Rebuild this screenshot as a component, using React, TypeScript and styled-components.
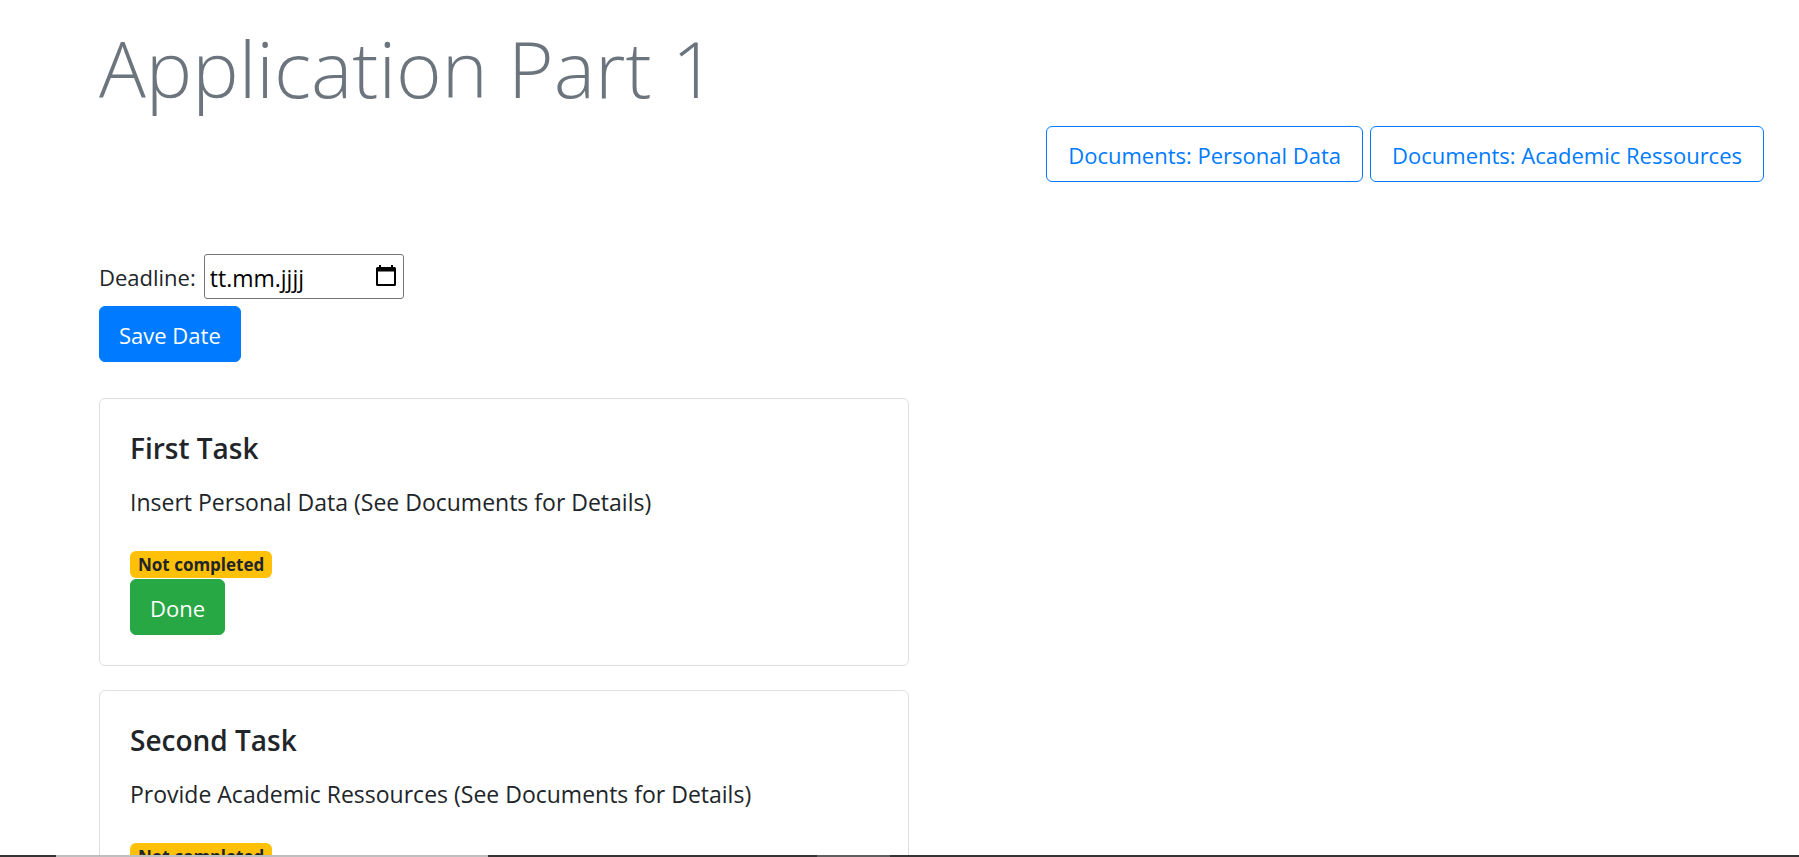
import React from 'react';
import styled, { createGlobalStyle } from 'styled-components';

const GlobalStyle = createGlobalStyle`
  *, *::before, *::after { box-sizing: border-box; }
  body {
    margin: 0;
    background: #fff;
    color: #212529;
    font-family: "Open Sans", "Noto Sans", sans-serif;
    font-size: 22px;
    line-height: 36px;
  }
`;

const Page = styled.main`
  display: flex;
  flex-direction: column;
  padding: 18px 35px 36px 99px;
`;

const Title = styled.h1`
  margin: 0;
  color: #6c757d;
  font-size: 78px;
  font-weight: 300;
  line-height: 101px;
`;

const DocumentLinks = styled.nav`
  display: flex;
  justify-content: flex-end;
  gap: 7px;
  margin-top: 7px;
`;

const variants = {
  primary: { background: '#007bff', border: '#007bff', text: '#fff', inset: 19 },
  success: { background: '#28a745', border: '#28a745', text: '#fff', inset: 19 },
  outline: { background: 'transparent', border: '#007bff', text: '#007bff', inset: 21 },
};

const Button = styled.button<{ $variant: keyof typeof variants }>`
  padding: 10px ${(p) => variants[p.$variant].inset}px 8px;
  border: 1px solid ${(p) => variants[p.$variant].border};
  border-radius: 6px;
  background: ${(p) => variants[p.$variant].background};
  color: ${(p) => variants[p.$variant].text};
  font: inherit;
  text-align: center;
  text-decoration: none;
  cursor: pointer;
`;

const DeadlineForm = styled.form`
  display: flex;
  flex-direction: column;
  align-items: flex-start;
  gap: 7px;
  margin: 72px 0 36px;
`;

const Field = styled.div`
  display: flex;
  align-items: center;
  gap: 8px;
`;

const DateBox = styled.div`
  display: flex;
  align-items: center;
  width: 200px;
  height: 45px;
  padding: 0 7px 0 5px;
  border: 1px solid #767676;
  border-radius: 3px;
`;

const DateInput = styled.input`
  flex: 1;
  min-width: 0;
  padding: 2px 0 0;
  border: 0;
  outline: 0;
  background: none;
  color: #000;
  font: inherit;
  font-size: 23px;

  &::placeholder { color: #000; opacity: 1; }
`;

const PickerButton = styled.button`
  display: flex;
  padding: 0 0 2px;
  border: 0;
  background: none;
  color: #000;
  cursor: pointer;
`;

const TaskList = styled.div`
  display: flex;
  flex-direction: column;
  gap: 24px;
  width: 45vw;
`;

const Card = styled.section`
  display: flex;
  flex-direction: column;
  align-items: flex-start;
  padding: 31px 30px 30px;
  border: 1px solid #dfdfdf;
  border-radius: 6px;
`;

const CardTitle = styled.h2`
  margin: 0 0 18px;
  font-size: 28px;
  font-weight: 600;
  line-height: 36px;
`;

const CardText = styled.p`
  margin: 0 0 31px;
  font-size: 23px;
`;

const Badge = styled.span`
  margin-bottom: 1px;
  padding: 0 8px;
  border-radius: 6px;
  background: #ffc107;
  font-size: 17px;
  font-weight: 700;
  line-height: 27px;
`;

const BottomStrip = styled.div`
  position: fixed;
  inset: auto 0 0;
  display: flex;
  height: 2px;
  background: #353334;
`;

const StripPart = styled.span<{ $share: number; $color?: string }>`
  width: ${(p) => p.$share}%;
  background: ${(p) => p.$color ?? 'transparent'};
`;

const CalendarIcon = () => (
  <svg width="20" height="21" viewBox="0 0 20 21" aria-hidden="true">
    <path
      fill="currentColor"
      fillRule="evenodd"
      d="M3 0h2v2h10V0h2v2h1.500a1.500 1.500 0 0 1 1.500 1.500v16a1.500 1.500 0 0 1-1.500 1.500h-17A1.500 1.500 0 0 1 0 19.500v-16A1.500 1.500 0 0 1 1.500 2H3zM2 6.500V19h16V6.500z"
    />
  </svg>
);

const tasks = [
  { title: 'First Task', text: 'Insert Personal Data (See Documents for Details)' },
  { title: 'Second Task', text: 'Provide Academic Ressources (See Documents for Details)' },
];

export default function App() {
  return (
    <>
      <GlobalStyle />
      <Page>
        <Title>Application Part 1</Title>
        <DocumentLinks>
          <Button as="a" href="#personal" $variant="outline">Documents: Personal Data</Button>
          <Button as="a" href="#academic" $variant="outline">Documents: Academic Ressources</Button>
        </DocumentLinks>
        <DeadlineForm onSubmit={(e) => e.preventDefault()}>
          <Field>
            <label htmlFor="deadline">Deadline:</label>
            <DateBox>
              <DateInput id="deadline" type="text" placeholder="tt.mm.jjjj" />
              <PickerButton type="button" aria-label="Kalender">
                <CalendarIcon />
              </PickerButton>
            </DateBox>
          </Field>
          <Button type="submit" $variant="primary">Save Date</Button>
        </DeadlineForm>
        <TaskList>
          {tasks.map((task) => (
            <Card key={task.title}>
              <CardTitle>{task.title}</CardTitle>
              <CardText>{task.text}</CardText>
              <Badge>Not completed</Badge>
              <Button type="button" $variant="success">Done</Button>
            </Card>
          ))}
        </TaskList>
      </Page>
      <BottomStrip>
        <StripPart $share={3.1} />
        <StripPart $share={24} $color="#bfbfbf" />
        <StripPart $share={18.3} />
        <StripPart $share={4.1} $color="#605e5f" />
      </BottomStrip>
    </>
  );
}
